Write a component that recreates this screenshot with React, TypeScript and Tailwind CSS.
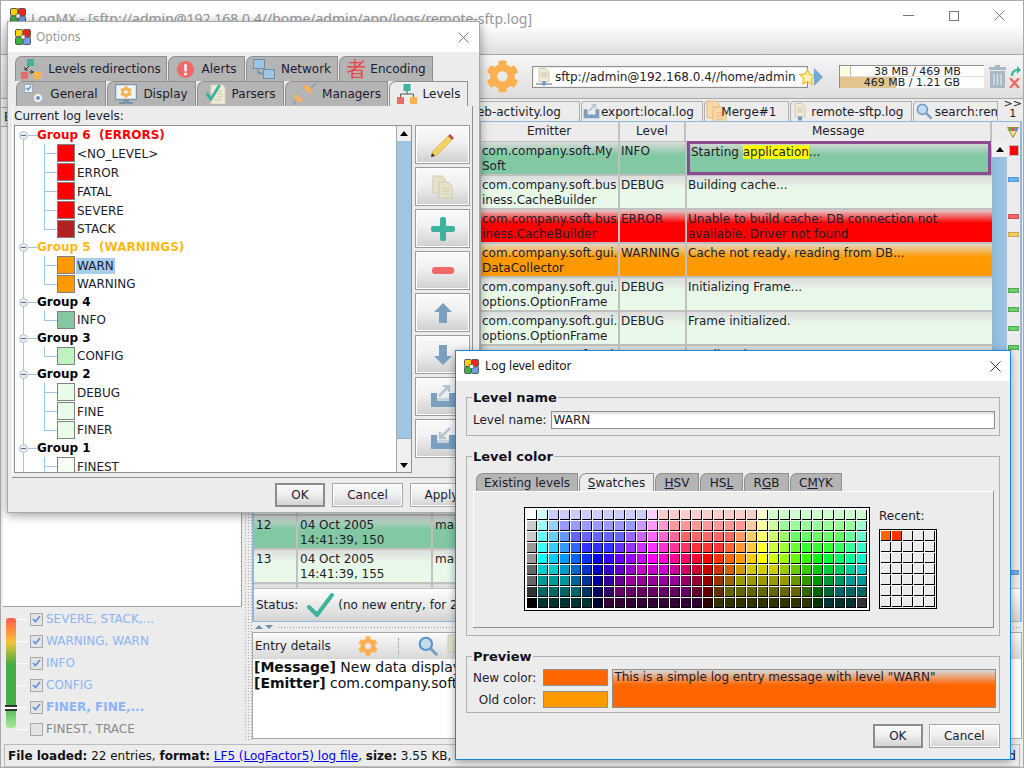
import type { ReactNode } from "react";
import { FaCog } from "react-icons/fa";

const LINE = "border-[#9ec6e8]";

function Logo({ size = 16 }: { size?: number }) {
  return (
    <svg width={size} height={size} viewBox="0 0 16 16" className="shrink-0">
      <rect x="0.5" y="0.5" width="7.5" height="7.5" rx="1.5" fill="#ffd400" stroke="#555" />
      <rect x="8" y="0.5" width="7.5" height="7.5" rx="1.5" fill="#e8281e" stroke="#555" />
      <rect x="0.5" y="8" width="7.5" height="7.5" rx="1.5" fill="#3fb13f" stroke="#555" />
      <rect x="8" y="8" width="7.5" height="7.5" rx="1.5" fill="#6f9fe8" stroke="#555" />
      <rect x="6" y="6" width="4" height="4" fill="#f4f4f4" stroke="#666" strokeWidth="0.7" />
    </svg>
  );
}

function XIcon({ color = "#333" }: { color?: string }) {
  return (
    <svg width="11" height="11" viewBox="0 0 11 11">
      <path d="M0.5 0.5l10 10M10.5 0.5l-10 10" stroke={color} fill="none" />
    </svg>
  );
}

function TreeSquares({ w = 20, h = 20 }: { w?: number; h?: number }) {
  return (
    <svg width={w} height={h} viewBox="0 0 20 20" className="shrink-0">
      <rect x="6.5" y="0" width="7" height="7" fill="#3db39e" />
      <path d="M10 7v3M3.5 13v-3h13v3" stroke="#555" fill="none" />
      <rect x="0" y="13" width="7" height="7" fill="#ef6a66" />
      <rect x="13" y="13" width="7" height="7" fill="#fbb150" />
    </svg>
  );
}

function RedirectIcon() {
  return (
    <svg width="21" height="21" viewBox="0 0 21 21" className="shrink-0">
      <rect x="6" y="0" width="7" height="7" fill="#3db39e" />
      <rect x="0" y="13" width="7" height="7" fill="#ef6a66" />
      <rect x="13" y="13" width="8" height="7" fill="#fbb150" />
      <path d="M4 11l4-4M8 13h5M10 11l2 2-2 2M4 8v3h3" stroke="#333" fill="none" />
    </svg>
  );
}

function AlertIcon() {
  return (
    <svg width="17" height="17" viewBox="0 0 17 17" className="shrink-0">
      <circle cx="8.5" cy="8.5" r="8.5" fill="#ef6a66" />
      <rect x="7.2" y="3" width="2.6" height="7.5" rx="1" fill="#fff" />
      <circle cx="8.5" cy="13" r="1.5" fill="#fff" />
    </svg>
  );
}

function NetworkIcon() {
  return (
    <svg width="22" height="20" viewBox="0 0 22 20" className="shrink-0">
      <rect x="0.5" y="0.5" width="11" height="9" fill="#9fc4e4" stroke="#6f8fa8" />
      <path d="M4 13h2v2h4" stroke="#6f8fa8" fill="none" />
      <rect x="10.5" y="10.5" width="11" height="9" fill="#9fc4e4" stroke="#6f8fa8" />
      <path d="M5 10v4h5" stroke="#6f8fa8" fill="none" />
    </svg>
  );
}

function GeneralIcon() {
  return (
    <svg width="20" height="20" viewBox="0 0 20 20" className="shrink-0">
      <rect x="0.5" y="0.5" width="8" height="8" fill="#eef3f8" stroke="#9aa9b8" />
      <path d="M2 4l2 2 3-4" stroke="#5b93cf" strokeWidth="1.4" fill="none" />
      <circle cx="14" cy="14" r="4.5" fill="#f4f4f4" stroke="#b5b5b5" />
      <circle cx="14" cy="14" r="2" fill="#5b93cf" />
    </svg>
  );
}

function DisplayIcon() {
  return (
    <svg width="22" height="20" viewBox="0 0 22 20" className="shrink-0">
      <rect x="0.5" y="0.5" width="21" height="15" fill="#f0f3f5" stroke="#7b94a8" strokeWidth="1.4" />
      <rect x="8" y="16" width="6" height="2" fill="#7b94a8" />
      <rect x="4" y="18" width="14" height="2" fill="#7b94a8" />
      <foreignObject x="5" y="2" width="12" height="12">
        <FaCog size={12} color="#fbb150" />
      </foreignObject>
    </svg>
  );
}

function ParserIcon() {
  return (
    <svg width="20" height="20" viewBox="0 0 20 20" className="shrink-0">
      <path d="M5 1h12l2 3v16H5z" fill="#efebd8" stroke="#dbd6bd" />
      <path d="M9 7h7M11 10h5M11 13h5M8 16h8" stroke="#c9c3a8" />
      <path d="M1 10l4 5 8-13" stroke="#3db39e" strokeWidth="3" fill="none" strokeLinecap="round" />
    </svg>
  );
}

function PlugIcon() {
  return (
    <svg width="24" height="22" viewBox="0 0 24 22" className="shrink-0">
      <path d="M0 22l5-5M19 5l5-5" stroke="#7b9fbf" strokeWidth="1.5" />
      <path d="M4 11l7 7c-3 2-6 1-7-1s-2-4 0-6z" fill="#fbb150" />
      <path d="M11 4l7 7c2-2 2-5 0-7s-5-2-7 0z" fill="#fbb150" />
      <path d="M9 10l3-3M12 13l3-3" stroke="#b9b9b9" strokeWidth="1.5" />
    </svg>
  );
}

function FileIcon({ dim }: { dim?: boolean }) {
  return (
    <svg width="16" height="18" viewBox="0 0 16 18" className="shrink-0">
      <path d="M3 0.5h7l3 3v10H3z" fill="#efebd8" stroke="#cfc9ad" />
      <path d="M5 5h6M5 7h6M5 9h6" stroke="#cfc9ad" />
      {!dim && <path d="M0 16h16M8 13v3" stroke="#666" />}
      <circle cx="8" cy="15.5" r="2.2" fill="#6f9fc9" />
    </svg>
  );
}

function ExportTray({ inward }: { inward?: boolean }) {
  return (
    <svg width="26" height="23" viewBox="0 0 26 23">
      <path d="M1 8h6v8h12V8h6v14H1z" fill="#7b9fbf" />
      <rect x="7" y="13" width="12" height="3" fill="#c9d3da" />
      {inward ? (
        <path d="M20 1L10 11M10 5v6h6" stroke="#b9c5ce" strokeWidth="2.6" fill="none" />
      ) : (
        <path d="M9 11L19 1M13 1h6v6" stroke="#b9c5ce" strokeWidth="2.6" fill="none" />
      )}
    </svg>
  );
}

function CopyDocs({ color = "#e6e1cb", line = "#cfc9ad" }: { color?: string; line?: string }) {
  return (
    <svg width="21" height="24" viewBox="0 0 21 24">
      <path d="M1 1h9l3 3v14H1z" fill={color} stroke={line} />
      <path d="M7 7h9l4 4v12H7z" fill={color} stroke={line} />
      <path d="M10 13h7M10 16h7M10 19h7" stroke={line} />
    </svg>
  );
}

function Tab({
  label,
  width,
  icon,
  active,
  gap,
  children,
}: {
  label?: string;
  width: string;
  icon?: ReactNode;
  active?: boolean;
  gap?: string;
  children?: ReactNode;
}) {
  return (
    <div
      className={`flex h-full items-center justify-center rounded-tl-[7px] border-x border-t border-[#8f8f8f] text-[#1c1c2c] ${width} ${gap ?? "gap-[6px]"} ${
        active ? "bg-[#ececec]" : "bg-[#b4b4b4]"
      }`}
    >
      {icon}
      {label}
      {children}
    </div>
  );
}

function SideButton({ children }: { children: ReactNode }) {
  return (
    <div className="flex h-[39px] w-[55px] items-center justify-center border border-[#9c9c9c] bg-[linear-gradient(#fafafa,#f0f0f0_45%,#cfcfcf)] shadow-[inset_0_0_0_1px_#fff]">
      {children}
    </div>
  );
}

function DialogButton({ label, width, main }: { label: string; width: string; main?: boolean }) {
  return (
    <div
      className={`flex h-[24px] items-center justify-center bg-[linear-gradient(#fafafa,#f0f0f0_45%,#d2d2d2)] text-[#1c1c2c] ${width} ${
        main ? "border-2 border-[#8c8c8c]" : "border border-[#a8a8a8] shadow-[inset_0_0_0_1px_#fff]"
      }`}
    >
      {label}
    </div>
  );
}

type Level = { name: string; color: string };

function TreeGroup({
  title,
  color,
  levels,
  selected,
}: {
  title: string;
  color: string;
  levels: Level[];
  selected?: string;
}) {
  return (
    <div>
      <div className="flex h-[18px] items-center pl-[3px]">
        <span className="relative z-10 h-[9px] w-[9px] rounded-full border border-[#b4c2d0] bg-[#e8edf3]">
          <span className="absolute left-[1px] top-[3px] h-px w-[5px] bg-[#5a6a7a]" />
        </span>
        <span className="h-px w-[9px] bg-[#9ec6e8]" />
        <span className={`font-bold ${color}`}>{title}</span>
      </div>
      {levels.map((l, i) => {
        const last = i === levels.length - 1;
        return (
          <div key={l.name} className={`relative ml-[28px] flex items-center ${last ? "h-[18px]" : "h-[19px]"}`}>
            <span className={`h-[10px] w-[13px] self-start border-b border-l ${LINE}`} />
            {!last && <span className={`absolute bottom-0 left-0 top-[10px] border-l ${LINE}`} />}
            <span className={`h-[18px] w-[18px] self-start border border-[#808080] ${l.color}`} />
            <span
              className={`ml-[1px] h-[16px] px-px leading-[16px] text-[#1c1c2c] ${
                l.name === selected ? "bg-[#a6cdec]" : ""
              }`}
            >
              {l.name}
            </span>
          </div>
        );
      })}
    </div>
  );
}

function OptionsWindow() {
  return (
    <div className="absolute left-[7px] top-[21px] z-10 flex h-[492px] w-[473px] flex-col border border-[#a9a9a9] bg-[#ececec] shadow-[0_2px_10px_rgba(0,0,0,0.4)]">
      <div className="flex h-[30px] shrink-0 items-center bg-white pl-[7px] pr-[10px] font-['Noto_Sans',sans-serif] text-[12px] text-[#999]">
        <Logo size={16} />
        <span className="ml-[5px] grow">Options</span>
        <XIcon color="#777" />
      </div>
      <div className="flex h-[25px] pl-[7px] pt-[4px] box-content">
        <div className="flex h-[25px] gap-px">
          <Tab label="Levels redirections" width="w-[152px]" icon={<RedirectIcon />} />
          <Tab label="Alerts" width="w-[77px]" icon={<AlertIcon />} gap="gap-[8px]" />
          <Tab label="Network" width="w-[92px]" icon={<NetworkIcon />} />
          <Tab label="Encoding" width="w-[94px]" gap="gap-[4px]">
            <span className="order-first font-['Noto_Sans_CJK_SC',sans-serif] text-[20px] leading-[20px] text-[#e8484a]">者</span>
          </Tab>
        </div>
      </div>
      <div className="flex h-[25px] gap-px pl-[8px]">
        <Tab label="General" width="w-[90px]" icon={<GeneralIcon />} />
        <Tab label="Display" width="w-[89px]" icon={<DisplayIcon />} />
        <Tab label="Parsers" width="w-[87px]" icon={<ParserIcon />} />
        <Tab label="Managers" width="w-[103px]" icon={<PlugIcon />} />
        <Tab label="Levels" width="w-[79px]" icon={<TreeSquares />} active />
      </div>
      <div className="mx-[4px] flex h-[372px] w-[461px] flex-col border-b border-r border-[#8f8f8f] border-l-[#f6f6f6] pl-[2px] shadow-[inset_1px_0_0_#fff]">
        <div className="flex h-[19px] items-center text-[#1c1c2c]">Current log levels:</div>
        <div className="flex h-[348px] gap-[3px]">
          <div className="flex w-[398px] border border-[#8f8f8f] bg-white">
            <div className="relative h-full grow overflow-hidden pl-[1px]">
              <span className="absolute bottom-0 left-[8px] top-[10px] w-px bg-[#9ec6e8]" />
              <TreeGroup
                title="Group 6  (ERRORS)"
                color="text-[#ff0000] whitespace-pre"
                levels={[
                  { name: "<NO_LEVEL>", color: "bg-[#ff0000]" },
                  { name: "ERROR", color: "bg-[#ff0000]" },
                  { name: "FATAL", color: "bg-[#ff0000]" },
                  { name: "SEVERE", color: "bg-[#ff0000]" },
                  { name: "STACK", color: "bg-[#b22222]" },
                ]}
              />
              <TreeGroup
                title="Group 5  (WARNINGS)"
                color="text-[#ffb914] whitespace-pre"
                selected="WARN"
                levels={[
                  { name: "WARN", color: "bg-[#ff9900]" },
                  { name: "WARNING", color: "bg-[#ff9900]" },
                ]}
              />
              <TreeGroup title="Group 4" color="text-black" levels={[{ name: "INFO", color: "bg-[#82c8a2]" }]} />
              <TreeGroup title="Group 3" color="text-black" levels={[{ name: "CONFIG", color: "bg-[#bff2bf]" }]} />
              <TreeGroup
                title="Group 2"
                color="text-black"
                levels={[
                  { name: "DEBUG", color: "bg-[#e9fbe9]" },
                  { name: "FINE", color: "bg-[#e9fbe9]" },
                  { name: "FINER", color: "bg-[#e9fbe9]" },
                ]}
              />
              <TreeGroup
                title="Group 1"
                color="text-black"
                levels={[
                  { name: "FINEST", color: "bg-[#f5fdf5]" },
                  { name: "TRACE", color: "bg-[#f5fdf5]" },
                ]}
              />
            </div>
            <div className="flex w-[15px] shrink-0 flex-col border-l border-[#a8a8a8]">
              <div className="flex h-[15px] items-center justify-center bg-[#f0f0f0]">
                <span className="h-0 w-0 border-x-[4px] border-b-[5px] border-x-transparent border-b-black" />
              </div>
              <div className="grow bg-[#9fc5e4]" />
              <div className="h-[20px] border-t border-[#a8a8a8] bg-[#f0f0f0]" />
              <div className="flex h-[14px] items-center justify-center bg-[#f0f0f0]">
                <span className="h-0 w-0 border-x-[4px] border-t-[5px] border-x-transparent border-t-black" />
              </div>
            </div>
          </div>
          <div className="flex flex-col gap-[3px] pt-0">
            <SideButton>
              <svg width="24" height="24" viewBox="0 0 24 24">
                <path d="M0 24l2-6L17 3l4 4L6 22z" fill="#f2d061" stroke="#d8b03c" strokeWidth="0.6" />
                <path d="M17 3l2-2 4 4-2 2z" fill="#b5504a" />
                <path d="M0 24l1-4 3 3z" fill="#333" />
              </svg>
            </SideButton>
            <SideButton>
              <CopyDocs />
            </SideButton>
            <SideButton>
              <svg width="24" height="24" viewBox="0 0 24 24">
                <path d="M9 2a2 2 0 0 1 2-2h2a2 2 0 0 1 2 2v7h7a2 2 0 0 1 2 2v2a2 2 0 0 1-2 2h-7v7a2 2 0 0 1-2 2h-2a2 2 0 0 1-2-2v-7H2a2 2 0 0 1-2-2v-2a2 2 0 0 1 2-2h7z" fill="#3db39e" />
              </svg>
            </SideButton>
            <SideButton>
              <span className="h-[7px] w-[22px] rounded-[3px] bg-[#ef6a66]" />
            </SideButton>
            <SideButton>
              <svg width="18" height="20" viewBox="0 0 18 20">
                <path d="M9 0l9 9h-5v11H5V9H0z" fill="#7b9fbf" />
              </svg>
            </SideButton>
            <SideButton>
              <svg width="18" height="20" viewBox="0 0 18 20">
                <path d="M9 20l9-9h-5V0H5v11H0z" fill="#7b9fbf" />
              </svg>
            </SideButton>
            <SideButton>
              <ExportTray />
            </SideButton>
            <SideButton>
              <ExportTray inward />
            </SideButton>
          </div>
        </div>
      </div>
      <div className="ml-[267px] mt-[5px] flex gap-[7px]">
        <DialogButton label="OK" width="w-[50px]" main />
        <DialogButton label="Cancel" width="w-[71px]" />
        <DialogButton label="Apply" width="w-[63px]" />
      </div>
    </div>
  );
}

const HUES: number[][] = [
  [0, 255, 255], [0, 204, 255], [0, 153, 255], [0, 102, 255], [0, 51, 255], [0, 0, 255],
  [51, 0, 255], [102, 0, 255], [153, 0, 255], [204, 0, 255], [255, 0, 255], [255, 0, 204],
  [255, 0, 153], [255, 0, 102], [255, 0, 51], [255, 0, 0], [255, 51, 0], [255, 102, 0],
  [255, 153, 0], [255, 204, 0], [255, 255, 0], [204, 255, 0], [153, 255, 0], [102, 255, 0],
  [51, 255, 0], [0, 255, 0], [0, 255, 51], [0, 255, 102], [0, 255, 153], [0, 255, 204],
];
const GREYS = [255, 204, 204, 153, 153, 102, 102, 51, 0];
const TINTS = [204, 153, 102, 51, 0, 0, 0, 0, 0];
const SHADES = [255, 255, 255, 255, 255, 204, 153, 102, 51];

function swatchColor(row: number, col: number) {
  if (col === 0) return `rgb(${GREYS[row]},${GREYS[row]},${GREYS[row]})`;
  if (row === 8 && col === 30) return "rgb(51,51,51)";
  const c = HUES[col - 1].map((v) => Math.min(Math.max(v, TINTS[row]), SHADES[row]));
  return `rgb(${c[0]},${c[1]},${c[2]})`;
}

function Swatches() {
  return (
    <div className="grid grid-cols-[repeat(31,10px)] gap-px border-2 border-white bg-white outline outline-1 outline-black -outline-offset-0 m-px">
      {GREYS.flatMap((_, row) =>
        Array.from({ length: 31 }).map((__, col) => (
          <span
            key={`${row}-${col}`}
            className="h-[10px] w-[10px] border-b border-r border-black"
            style={{ backgroundColor: swatchColor(row, col) }}
          />
        )),
      )}
    </div>
  );
}

function RecentSwatches() {
  return (
    <div className="grid grid-cols-[repeat(5,10px)] gap-px border border-black bg-white p-px">
      {Array.from({ length: 35 }).map((_, i) => (
        <span
          key={i}
          className={`h-[10px] w-[10px] border-b border-r border-black ${
            i === 0 ? "bg-[#ff6600]" : i === 1 ? "bg-[#ff3300]" : "bg-[#ececec]"
          }`}
        />
      ))}
    </div>
  );
}

function Group({ title, height, children }: { title: string; height: string; children: ReactNode }) {
  return (
    <fieldset className={`border border-[#b0b0b0] ${height}`}>
      <legend className="ml-[5px] h-[15px] px-px text-[13px] font-bold leading-[15px] text-[#101020]">{title}</legend>
      {children}
    </fieldset>
  );
}

function LevelEditor() {
  return (
    <div className="absolute left-[455px] top-[350px] z-20 flex h-[410px] w-[556px] flex-col border border-[#1a86d9] bg-[#ececec] shadow-[0_2px_8px_rgba(0,0,0,0.35)]">
      <div className="flex h-[30px] shrink-0 items-center bg-white pl-[8px] pr-[9px] font-['Noto_Sans',sans-serif] text-[12px] text-[#111]">
        <Logo size={15} />
        <span className="ml-[6px] grow">Log level editor</span>
        <XIcon />
      </div>
      <div className="flex flex-col px-[10px] pt-[9px]">
        <Group title="Level name" height="h-[46px]">
          <div className="flex items-center pl-[6px] pt-[6px]">
            <span className="text-[#1c1c2c]">Level name:</span>
            <div className="ml-[4px] flex h-[18px] w-[444px] items-center border border-[#8f8f8f] bg-white pl-[2px] text-[#1c1c2c] shadow-[inset_0_2px_3px_#ddd]">
              WARN
            </div>
          </div>
        </Group>
        <div className="h-[13px]" />
        <Group title="Level color" height="h-[187px]">
          <div className="ml-[6px] mt-[9px] flex h-[18px] gap-px pl-[3px]">
            <Tab label="Existing levels" width="w-[102px]" />
            <Tab width="w-[75px]" active>
              <span>
                <span className="underline">S</span>watches
              </span>
            </Tab>
            <Tab width="w-[44px]">
              <span>
                <span className="underline">H</span>SV
              </span>
            </Tab>
            <Tab width="w-[43px]">
              <span>
                HS<span className="underline">L</span>
              </span>
            </Tab>
            <Tab width="w-[45px]">
              <span>
                R<span className="underline">G</span>B
              </span>
            </Tab>
            <Tab width="w-[52px]">
              <span>
                C<span className="underline">M</span>YK
              </span>
            </Tab>
          </div>
          <div className="ml-[6px] flex h-[137px] w-[521px] items-start border-b border-r border-[#8f8f8f] pl-[51px] pt-[16px] shadow-[inset_1px_1px_0_#fff]">
            <Swatches />
            <div className="ml-[9px] flex h-[102px] flex-col justify-end">
              <span className="h-[22px] text-[#1c1c2c]">Recent:</span>
              <RecentSwatches />
            </div>
          </div>
        </Group>
        <div className="h-[13px]" />
        <Group title="Preview" height="h-[64px]">
          <div className="flex pl-[6px] pt-[5px] text-[#1c1c2c]">
            <div className="flex flex-col gap-[5px]">
              <div className="flex h-[17px] items-center justify-end gap-[7px]">
                New color:
                <span className="h-[17px] w-[65px] border border-[#8f8f8f] bg-[#ff6600]" />
              </div>
              <div className="flex h-[17px] items-center justify-end gap-[7px]">
                Old color:
                <span className="h-[17px] w-[65px] border border-[#8f8f8f] bg-[#ff9900]" />
              </div>
            </div>
            <div className="ml-[4px] h-[39px] w-[384px] border border-[#8f8f8f] bg-[linear-gradient(#d8d8d8,#ff6600_15px)] pl-px leading-[15px]">
              This is a simple log entry message with level "WARN"
            </div>
          </div>
        </Group>
        <div className="ml-[407px] mt-[11px] flex gap-[6px]">
          <DialogButton label="OK" width="w-[50px]" main />
          <DialogButton label="Cancel" width="w-[72px]" />
        </div>
      </div>
    </div>
  );
}

const ROW_STYLES: Record<string, string> = {
  INFO: "bg-[linear-gradient(#dcdcdc,#82c8a2_13px)]",
  DEBUG: "bg-[linear-gradient(#dcdcdc,#e9f9e9_13px)]",
  ERROR: "bg-[linear-gradient(#e4c8c8,#ff0000_13px)]",
  WARNING: "bg-[linear-gradient(#e4d8c4,#ff9900_13px)]",
  CONFIG: "bg-[linear-gradient(#dcdcdc,#bff2bf_13px)]",
};

const ROWS = [
  { n: 1, t: "140", e: "com.company.soft.MySoft", l: "INFO", m: "start" },
  { n: 2, t: "141", e: "com.company.soft.business.CacheBuilder", l: "DEBUG", m: "Building cache..." },
  { n: 3, t: "142", e: "com.company.soft.business.CacheBuilder", l: "ERROR", m: "Unable to build cache: DB connection not available. Driver not found" },
  { n: 4, t: "143", e: "com.company.soft.gui.DataCollector", l: "WARNING", m: "Cache not ready, reading from DB..." },
  { n: 5, t: "144", e: "com.company.soft.gui.options.OptionFrame", l: "DEBUG", m: "Initializing Frame..." },
  { n: 6, t: "145", e: "com.company.soft.gui.options.OptionFrame", l: "DEBUG", m: "Frame initialized." },
  { n: 7, t: "146", e: "com.company.soft.gui.DataCollector", l: "DEBUG", m: "Loading data..." },
  { n: 8, t: "147", e: "com.company.soft.gui.DataCollector", l: "DEBUG", m: "Data loaded." },
  { n: 9, t: "148", e: "com.company.soft.gui.DataCollector", l: "CONFIG", m: "Using default config" },
  { n: 10, t: "149", e: "com.company.soft.gui.DataCollector", l: "DEBUG", m: "Refreshing..." },
  { n: 11, t: "149", e: "com.company.soft.gui.DataCollector", l: "DEBUG", m: "Refreshed." },
  { n: 12, t: "150", e: "com.company.soft.gui.DataCollector", l: "INFO", m: "New data displayed" },
  { n: 13, t: "155", e: "com.company.soft.gui.DataCollector", l: "DEBUG", m: "Done." },
  { n: 14, t: "156", e: "com.company.soft.gui.DataCollector", l: "DEBUG", m: "Done." },
];

function TableHeader() {
  return (
    <div className="flex h-[20px] shrink-0 border-b border-[#c0c0c0] bg-[#ececec] text-center leading-[19px] text-[#1c1c2c]">
      <div className="w-[44px] border-r-2 border-[#c0c0c0]">#</div>
      <div className="w-[135px] border-r-2 border-[#c0c0c0]">Date</div>
      <div className="w-[48px] border-r-2 border-[#c0c0c0]">Thread</div>
      <div className="w-[139px] border-r-2 border-[#c0c0c0]">Emitter</div>
      <div className="w-[67px] border-r-2 border-[#c0c0c0]">Level</div>
      <div className="w-[306px] border-r-2 border-[#c0c0c0]">Message</div>
    </div>
  );
}

function TableRow({ row }: { row: (typeof ROWS)[number] }) {
  return (
    <div className={`flex h-[34px] shrink-0 border-b-2 border-[#c0c0c0] pl-0 leading-[15px] text-[#1c1c2c] ${ROW_STYLES[row.l]}`}>
      <div className="w-[44px] border-r-2 border-[#c0c0c0] pl-[2px] pt-[2px]">{row.n}</div>
      <div className="w-[135px] border-r-2 border-[#c0c0c0] pl-[2px] pt-[2px]">04 Oct 2005 14:41:39, {row.t}</div>
      <div className="w-[48px] border-r-2 border-[#c0c0c0] pl-[2px] pt-[2px]">main</div>
      <div className="w-[139px] break-all border-r-2 border-[#c0c0c0] pl-[1px] pt-[2px]">{row.e}</div>
      <div className="w-[67px] border-r-2 border-[#c0c0c0] pl-[1px] pt-[2px]">{row.l}</div>
      {row.m === "start" ? (
        <div className="relative -top-px h-[34px] w-[304px] border-[3px] border-[#8e4a90] pl-[1px] pt-[1px]">
          Starting <span className="bg-[#ffff00]">application</span>...
        </div>
      ) : (
        <div className="w-[304px] pl-[1px] pt-[2px]">{row.m}</div>
      )}
    </div>
  );
}

const MARKS = [
  { top: "top-[35px]", cls: "bg-[#6fb0ee] border-[#5a95cf]" },
  { top: "top-[72px]", cls: "bg-[#ef6a6a] border-[#c95050]" },
  { top: "top-[90px]", cls: "bg-[#f0cc66] border-[#c9a84a]" },
  { top: "top-[146px]", cls: "bg-[#6fce6f] border-[#50a850]" },
  { top: "top-[165px]", cls: "bg-[#6fce6f] border-[#50a850]" },
  { top: "top-[184px]", cls: "bg-[#6fce6f] border-[#50a850]" },
  { top: "top-[203px]", cls: "bg-[#6fce6f] border-[#50a850]" },
  { top: "top-[428px]", cls: "bg-[#6fb0ee] border-[#5a95cf]" },
];

function OverviewStrip() {
  return (
    <div className="relative w-[13px] shrink-0 bg-[#ececec]">
      <span className="absolute left-[3px] top-[4px] h-[9px] w-[8px] bg-[#ff0000] outline outline-1 outline-[#bbb]" />
      {MARKS.map((m) => (
        <span key={m.top} className={`absolute left-[1px] h-[5px] w-[11px] border ${m.top} ${m.cls}`} />
      ))}
    </div>
  );
}

function LogTabs() {
  return (
    <div className="flex h-[22px] shrink-0 items-end gap-px pl-[2px] text-[#1c1c2c]">
      <div className="flex h-[20px] w-[330px] items-center justify-end rounded-tl-[4px] border-x border-t border-[#b0b0b0] pr-[18px]">web-activity.log</div>
      <div className="flex h-[20px] w-[124px] items-center gap-px rounded-tl-[4px] border-x border-t border-[#b0b0b0] pl-px">
        <svg width="17" height="15" viewBox="0 0 26 23"><path d="M1 8h6v8h12V8h6v14H1z" fill="#7b9fbf" /><path d="M9 11L19 1M13 1h6v6" stroke="#b9c5ce" strokeWidth="2.6" fill="none" /></svg>
        export:local.log
      </div>
      <div className="flex h-[20px] w-[86px] items-center gap-[2px] rounded-tl-[4px] border-x border-t border-[#b0b0b0] pl-px">
        <CopyDocs color="#f8d9a8" line="#e8b878" />
        <span className="-ml-[8px]">Merge#1</span>
      </div>
      <div className="flex h-[20px] w-[123px] items-center gap-[3px] rounded-tl-[4px] border-x border-t border-[#b0b0b0] pl-px">
        <FileIcon dim />
        remote-sftp.log
      </div>
      <div className="flex h-[20px] w-[86px] items-center gap-[2px] overflow-hidden rounded-tl-[4px] border-x border-t border-[#b0b0b0] pl-[2px]">
        <svg width="17" height="17" viewBox="0 0 24 24" className="shrink-0"><circle cx="9" cy="9" r="7" fill="#c4dcf0" stroke="#6f9fc9" strokeWidth="2.5" /><path d="M14 14l8 8" stroke="#7b9fbf" strokeWidth="3.5" /></svg>
        <span className="whitespace-nowrap">search:rem</span>
      </div>
      <div className="mb-[2px] ml-[5px] flex h-[20px] flex-col items-center text-[11px] leading-[10px]">
        <span>&gt;&gt;</span>
        <span>1</span>
      </div>
    </div>
  );
}

function MainToolbar() {
  return (
    <div className="flex h-[44px] shrink-0 items-center border-b border-[#a8a8a8] bg-[linear-gradient(#f6f6f6,#dedede)] pl-[485px]">
      <FaCog size={33} color="#fbb150" />
      <div className="ml-[13px] flex h-[22px] w-[276px] items-center border border-[#8f8f8f] bg-white pl-[3px] shadow-[inset_0_0_0_1px_#eee]">
        <FileIcon />
        <span className="ml-[3px] whitespace-nowrap text-[#1c1c2c]">sftp://admin@192.168.0.4//home/admin</span>
        <svg width="17" height="16" viewBox="0 0 24 23" className="ml-[3px] shrink-0">
          <path d="M12 1l3.4 7.2 7.6 1-5.6 5.4 1.4 7.7L12 18l-6.8 3.3 1.4-7.7L1 8.2l7.6-1z" fill="#fff3b8" stroke="#f2c23c" strokeWidth="2" />
        </svg>
      </div>
      <span className="ml-[6px] h-0 w-0 border-y-[9px] border-l-[9px] border-y-transparent border-l-[#6fa9d6]" />
      <div className="ml-[16px] flex h-[23px] w-[145px] flex-col border-y border-l border-[#8f8f8f] bg-white text-center text-[11px] leading-[11px] text-[#1c1c2c]">
        <div className="flex h-[11px] border-b border-[#ddd]">
          <span className="w-[11px] border-r border-[#bbb] bg-[#fffde0]" />
          <span className="grow">38 MB / 469 MB</span>
        </div>
        <div className="flex h-[11px]">
          <div className="w-full bg-[linear-gradient(90deg,#e2c48e_39%,#fff_39%)]">469 MB / 1.21 GB</div>
        </div>
      </div>
      <svg width="17" height="23" viewBox="0 0 17 23" className="ml-[5px] shrink-0">
        <path d="M6 0h5v2h6v3H0V2h6z" fill="#a8b8c4" />
        <path d="M1 6h15v17H1z" fill="#a8b8c4" />
        <path d="M5 9v11M8.5 9v11M12 9v11" stroke="#dde4e8" strokeWidth="1.3" />
      </svg>
      <div className="ml-[3px] flex flex-col gap-[2px]">
        <svg width="12" height="10" viewBox="0 0 12 10">
          <path d="M2 10c0-5 3-7 6-7V0l4 4-4 4V5c-2 0-4 2-4 5z" fill="#3db39e" />
        </svg>
        <svg width="11" height="10" viewBox="0 0 11 10">
          <path d="M1 0l9 10M10 0L1 10" stroke="#ef6a66" strokeWidth="2.4" />
        </svg>
      </div>
    </div>
  );
}

function LeftColumn() {
  const levels = [
    { name: "SEVERE, STACK,...", on: true },
    { name: "WARNING, WARN", on: true },
    { name: "INFO", on: true },
    { name: "CONFIG", on: true },
    { name: "FINER, FINE,...", on: true, bold: true },
    { name: "FINEST, TRACE", on: false },
  ];
  return (
    <div className="flex w-[243px] shrink-0 flex-col">
      <div className="mt-[8px] flex h-[20px] items-center border-y border-[#a8a8a8] pl-[3px] text-[#1c1c2c]">Emitters</div>
      <div className="ml-[2px] h-[480px] w-[239px] border-b border-r border-[#a0a0a0] bg-white" />
      <div className="relative flex grow pl-[5px]">
        <div className="relative mt-[11px] h-[110px] w-[10px] rounded-[3px] bg-[linear-gradient(#ff5a4a,#f7c33c_22%,#44ad44_42%,#44ad44_78%,#a5eb9b)]">
          <span className="absolute -left-[1px] top-[87px] h-[6px] w-[12px] border-y-2 border-[#333] bg-white" />
        </div>
        <div className="ml-[2px] flex flex-col pt-[1px]">
          {levels.map((l) => (
            <div key={l.name} className="flex h-[22px] items-center">
              <span className="h-px w-[9px] bg-white" />
              <span className="ml-[3px] flex h-[13px] w-[13px] items-center justify-center border border-[#a8a8a8] bg-[#e4e4e4]">
                {l.on && (
                  <svg width="9" height="8" viewBox="0 0 9 8">
                    <path d="M1 4l2.5 2.5L8 1" stroke="#5b93e6" strokeWidth="1.7" fill="none" />
                  </svg>
                )}
              </span>
              <span
                className={`ml-[3px] whitespace-nowrap ${l.bold ? "font-bold" : ""} ${
                  l.on ? "text-[#8db4f5]" : "text-[#8a8a8a]"
                }`}
              >
                {l.name}
              </span>
            </div>
          ))}
        </div>
      </div>
    </div>
  );
}

function RightColumn() {
  return (
    <div className="flex w-[770px] shrink-0 flex-col">
      <LogTabs />
      <div className="flex h-[501px] shrink-0 flex-col border border-[#8fb8df] border-x-2">
        <div className="flex min-h-0 grow">
          <div className="flex w-[738px] shrink-0 flex-col overflow-hidden">
            <TableHeader />
            {ROWS.map((r) => (
              <TableRow key={r.n} row={r} />
            ))}
          </div>
          <div className="flex w-[28px] shrink-0 flex-col">
            <div className="flex h-[20px] items-center justify-center bg-[#ececec] pl-[14px]">
              <svg width="12" height="11" viewBox="0 0 12 11">
                <path d="M0.5 0.5h11l-5.5 10z" fill="#f0e090" stroke="#a08a30" />
                <rect x="1.5" y="1" width="3" height="3" fill="#50b050" />
                <rect x="4.5" y="1" width="3" height="3" fill="#e84040" />
                <rect x="7.5" y="1" width="3" height="3" fill="#5090e0" />
              </svg>
            </div>
            <div className="flex grow">
              <div className="flex w-[15px] shrink-0 flex-col">
                <div className="flex h-[15px] items-center justify-center bg-[#f0f0f0]">
                  <span className="h-0 w-0 border-x-[4px] border-b-[5px] border-x-transparent border-b-black" />
                </div>
                <div className="grow bg-[linear-gradient(90deg,#8fb8d8,#a0c6e6)]" />
                <div className="flex h-[29px] items-center justify-center border border-[#7b9fbf] bg-[#b8d0e4]" />
              </div>
              <OverviewStrip />
            </div>
          </div>
        </div>
        <div className="flex h-[33px] shrink-0 items-center border-t border-[#c0c0c0] bg-[linear-gradient(#ffffff,#d4d4d4)] pl-[2px] text-[#1c1c2c]">
          Status:
          <svg width="27" height="26" viewBox="0 0 27 26" className="ml-[9px] shrink-0">
            <path d="M2 15l8 8L25 3" stroke="#3db39e" strokeWidth="4" fill="none" strokeLinecap="round" strokeLinejoin="round" />
          </svg>
          <span className="ml-[4px]">(no new entry, for 22 seconds)</span>
        </div>
      </div>
      <div className="flex h-[10px] shrink-0 items-center gap-[2px] pl-[3px]">
        <span className="h-0 w-0 border-x-[4px] border-b-[4px] border-x-transparent border-b-[#6f8fa8]" />
        <span className="h-0 w-0 border-x-[4px] border-t-[4px] border-x-transparent border-t-[#6f8fa8]" />
        <span className="ml-[2px] h-[3px] grow bg-[radial-gradient(#999_0.7px,transparent_0.8px)] bg-[length:3px_3px]" />
      </div>
      <div className="flex h-[107px] shrink-0 flex-col border border-[#a8a8a8]">
        <div className="flex h-[26px] shrink-0 items-center bg-[linear-gradient(#fafafa,#d8d8d8)] pl-[2px] text-[#1c1c2c]">
          Entry details
          <FaCog size={20} color="#fbb150" className="ml-[27px]" />
          <span className="ml-[20px] h-[16px] border-l border-dotted border-[#999]" />
          <svg width="21" height="21" viewBox="0 0 24 24" className="ml-[19px] shrink-0">
            <circle cx="9" cy="9" r="7" fill="#c4dcf0" stroke="#5b93cf" strokeWidth="2.5" />
            <path d="M14 14l8 8" stroke="#7b9fbf" strokeWidth="3.5" />
          </svg>
          <span className="ml-[8px]">
            <CopyDocs />
          </span>
        </div>
        <div className="grow bg-white pl-px text-[14px] leading-[16px] text-[#111]">
          <div><b>[Message]</b> New data displayed</div>
          <div><b>[Emitter]</b> com.company.soft.gui.DataCollector</div>
        </div>
      </div>
    </div>
  );
}

export default function App() {
  return (
    <div className="relative h-[768px] w-[1024px] overflow-hidden bg-[#ececec] font-['DejaVu_Sans',sans-serif] text-[12px]">
      <div className="flex h-[768px] flex-col border border-[#a9a9a9]">
        <div className="flex h-[54px] shrink-0 items-start border-b border-[#a8a8a8] bg-[linear-gradient(#fff_45%,#dedede)] pl-[9px] pt-[7px] font-['Noto_Sans',sans-serif] text-[14px] text-[#999]">
          <Logo size={16} />
          <span className="ml-[5px] grow whitespace-nowrap">LogMX - [sftp://admin@192.168.0.4//home/admin/app/logs/remote-sftp.log]</span>
          <div className="flex items-center gap-[35px] pr-[18px] pt-[2px]">
            <span className="h-px w-[11px] bg-[#777]" />
            <span className="h-[10px] w-[10px] border border-[#777]" />
            <XIcon color="#777" />
          </div>
        </div>
        <MainToolbar />
        <div className="flex h-[643px] shrink-0">
          <LeftColumn />
          <div className="w-[8px] shrink-0 bg-[radial-gradient(#aaa_0.7px,transparent_0.8px)] bg-[length:3px_3px]" />
          <RightColumn />
        </div>
        <div className="mx-[3px] mt-[2px] flex grow items-center justify-between border border-[#bbb] pl-[3px] pr-[3px] text-[#111]">
          <span className="whitespace-nowrap">
            <b>File loaded:</b> 22 entries, <b>format:</b>{" "}
            <span className="text-[#0000ee] underline">LF5 (LogFactor5) log file</span>, <b>size:</b> 3.55 KB, <b>date:</b> 04 Oct 2005
          </span>
          <span>Loaded</span>
        </div>
      </div>
      <OptionsWindow />
      <LevelEditor />
    </div>
  );
}
